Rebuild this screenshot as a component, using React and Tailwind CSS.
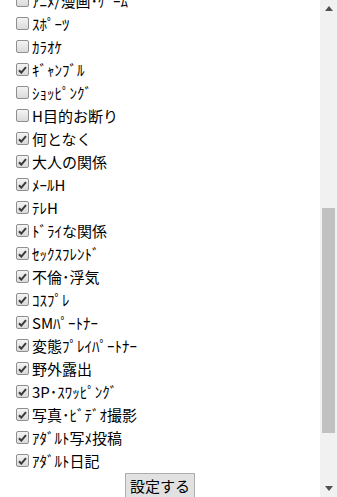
import React from 'react';

const items = [
  { label: 'ｱﾆﾒ/漫画･ｹﾞｰﾑ', checked: false },
  { label: 'ｽﾎﾟｰﾂ', checked: false },
  { label: 'ｶﾗｵｹ', checked: false },
  { label: 'ｷﾞｬﾝﾌﾞﾙ', checked: true },
  { label: 'ｼｮｯﾋﾟﾝｸﾞ', checked: false },
  { label: 'H目的お断り', checked: false },
  { label: '何となく', checked: true },
  { label: '大人の関係', checked: true },
  { label: 'ﾒｰﾙH', checked: true },
  { label: 'ﾃﾚH', checked: true },
  { label: 'ﾄﾞﾗｲな関係', checked: true },
  { label: 'ｾｯｸｽﾌﾚﾝﾄﾞ', checked: true },
  { label: '不倫･浮気', checked: true },
  { label: 'ｺｽﾌﾟﾚ', checked: true },
  { label: 'SMﾊﾟｰﾄﾅｰ', checked: true },
  { label: '変態ﾌﾟﾚｲﾊﾟｰﾄﾅｰ', checked: true },
  { label: '野外露出', checked: true },
  { label: '3P･ｽﾜｯﾋﾟﾝｸﾞ', checked: true },
  { label: '写真･ﾋﾞﾃﾞｵ撮影', checked: true },
  { label: 'ｱﾀﾞﾙﾄ写ﾒ投稿', checked: true },
  { label: 'ｱﾀﾞﾙﾄ日記', checked: true },
];

const Box = ({ checked }) => (
  <span className="w-[13px] h-[13px] shrink-0 border border-[#8f8f8f] rounded-[2px] bg-gradient-to-b from-[#f4f4f4] to-[#dadada] flex items-center justify-center">
    {checked && (
      <svg width="9" height="8" viewBox="0 0 9 8">
        <path d="M1 4.2 L3.3 6.6 L8 1.2" stroke="#3a3a3a" strokeWidth="2" fill="none" />
      </svg>
    )}
  </span>
);

export default function App() {
  return (
    <div
      className="w-[337px] h-[497px] overflow-hidden flex bg-white text-black"
      style={{ fontFamily: '"Noto Sans CJK JP", "Liberation Sans", sans-serif' }}
    >
      <div className="w-[320px] h-full overflow-hidden">
        <div className="mt-[-11px]">
          {items.map((it) => (
            <label key={it.label} className="h-[23px] flex items-center pl-[16px] gap-[3px] text-[15px] leading-none">
              <Box checked={it.checked} />
              <span>{it.label}</span>
            </label>
          ))}
          <div className="flex justify-center pt-[1px]">
            <button className="w-[70px] h-[25px] border border-[#adadad] bg-[#e1e1e1] text-[15px] leading-none">
              設定する
            </button>
          </div>
        </div>
      </div>
      <div className="w-[17px] h-full bg-[#f1f1f1] flex flex-col items-center">
        <div className="h-[17px] flex items-center justify-center">
          <svg width="8" height="5" viewBox="0 0 8 5"><path d="M0 5 L4 0 L8 5 Z" fill="#505050" /></svg>
        </div>
        <div className="h-[191px]" />
        <div className="w-[13px] h-[225px] bg-[#c1c1c1]" />
        <div className="flex-1" />
        <div className="h-[17px] flex items-center justify-center">
          <svg width="8" height="5" viewBox="0 0 8 5"><path d="M0 0 L8 0 L4 5 Z" fill="#505050" /></svg>
        </div>
      </div>
    </div>
  );
}
